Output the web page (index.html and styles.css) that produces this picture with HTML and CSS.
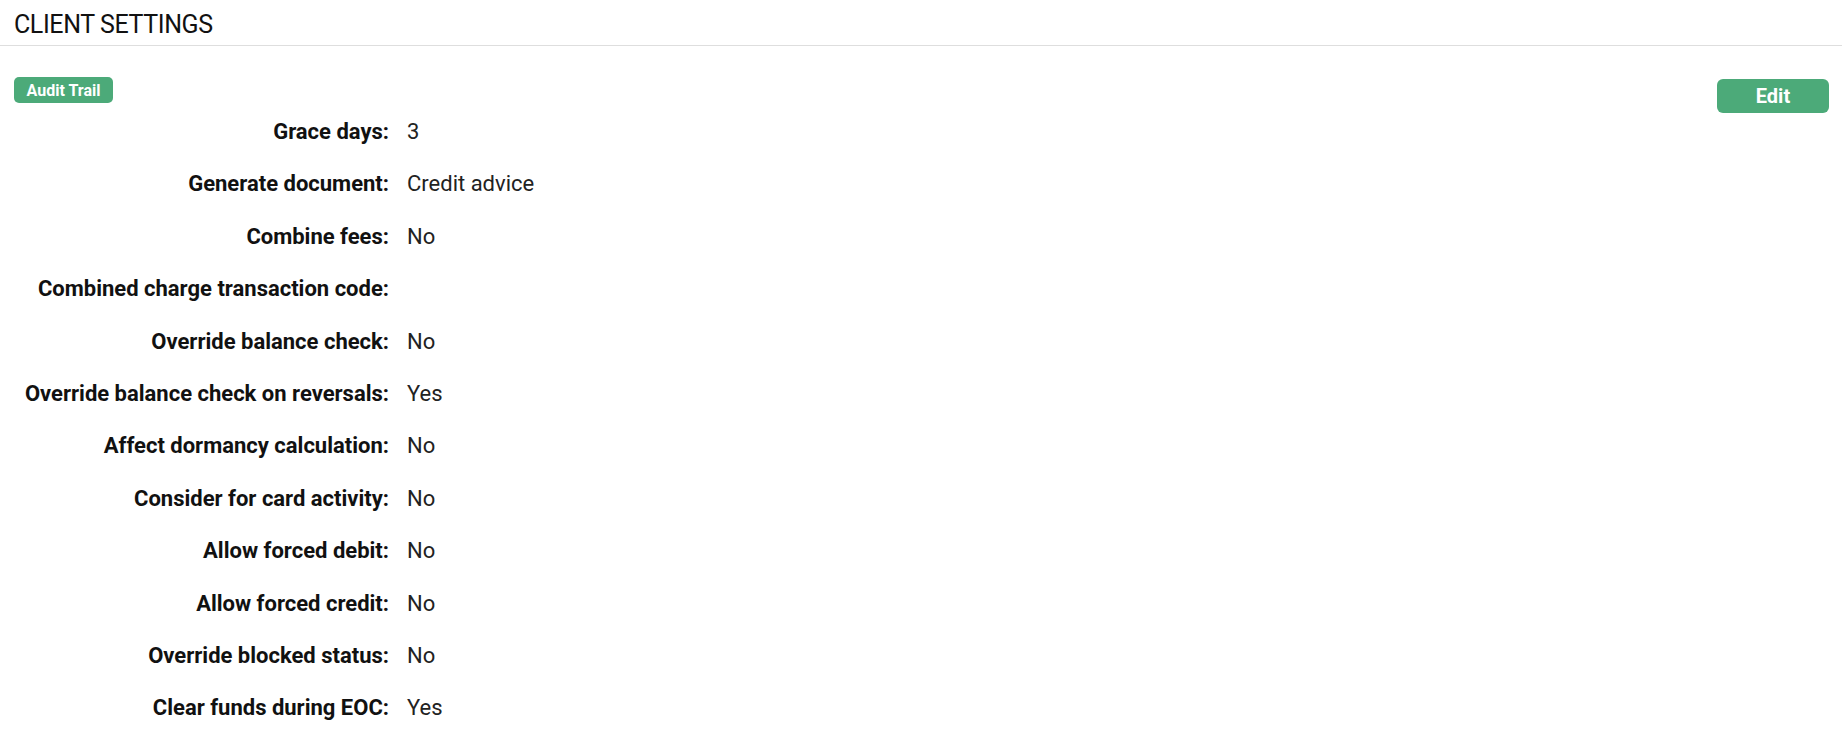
FILE: index.html
```html
<!DOCTYPE html>
<html lang="en">
<head>
  <meta charset="UTF-8">
  <meta name="viewport" content="width=device-width, initial-scale=1.0">
  <title>Client Settings</title>
  <link rel="stylesheet" href="styles.css">
</head>
<body>

<div class="panel">
  <h2 class="panel-title">CLIENT SETTINGS</h2>

  <!-- Toolbar -->
  <div class="toolbar">
    <button class="badge-btn">Audit Trail</button>
    <button class="edit-btn">Edit</button>
  </div>

  <!-- Settings list -->
  <dl class="settings">
    <dt>Grace days:</dt>
    <dd>3</dd>
    <dt>Generate document:</dt>
    <dd>Credit advice</dd>
    <dt>Combine fees:</dt>
    <dd>No</dd>
    <dt>Combined charge transaction code:</dt>
    <dd></dd>
    <dt>Override balance check:</dt>
    <dd>No</dd>
    <dt>Override balance check on reversals:</dt>
    <dd>Yes</dd>
    <dt>Affect dormancy calculation:</dt>
    <dd>No</dd>
    <dt>Consider for card activity:</dt>
    <dd>No</dd>
    <dt>Allow forced debit:</dt>
    <dd>No</dd>
    <dt>Allow forced credit:</dt>
    <dd>No</dd>
    <dt>Override blocked status:</dt>
    <dd>No</dd>
    <dt>Clear funds during EOC:</dt>
    <dd>Yes</dd>
  </dl>
</div>

</body>
</html>
```

FILE: styles.css
```css
/* General Styles */
body {
  font-family: 'Roboto', 'Liberation Sans', sans-serif;
  background-color: #fff;
  color: #1a1a1a;
  margin: 0;
  padding: 0;
}

.panel {
  width: 100%;
}

.panel-title {
  margin: 0;
  padding: 5px 14px 0;
  height: 40px;
  line-height: 40px;
  font-size: 25px;
  font-weight: 400;
  letter-spacing: -0.4px;
  color: #111;
  border-bottom: 1px solid #dedede;
}

/* Toolbar */
.toolbar {
  display: flex;
  justify-content: space-between;
  align-items: flex-start;
  height: 29px;
  margin-top: 31px;
  padding: 0 13px 0 14px;
}

button {
  font-family: inherit;
  background-color: #4caa79;
  color: #fff;
  border: none;
  cursor: pointer;
  display: flex;
  align-items: center;
  justify-content: center;
  padding: 0;
}

.badge-btn {
  width: 99px;
  height: 26px;
  border-radius: 5px;
  font-size: 16px;
  font-weight: 700;
}

.edit-btn {
  width: 112px;
  height: 34px;
  margin-top: 2px;
  border-radius: 6px;
  font-size: 20px;
  font-weight: 700;
}

/* Settings list */
.settings {
  display: grid;
  grid-template-columns: 389px 1fr;
  column-gap: 18px;
  margin: 0;
  font-size: 22px;
  line-height: 52.4px;
}

.settings dt {
  text-align: right;
  font-weight: 700;
  color: #111;
}

.settings dd {
  margin: 0;
  font-weight: 400;
  color: #222;
  min-height: 52.4px;
}
```
